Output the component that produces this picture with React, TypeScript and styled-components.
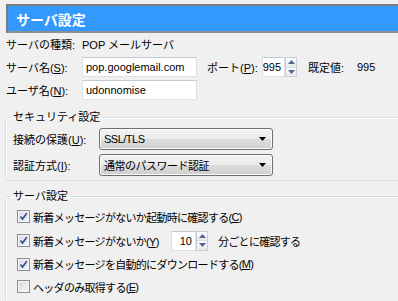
import styled, { createGlobalStyle } from "styled-components";

const Global = createGlobalStyle`
  body {
    margin: 0;
    background: #f0f0f0;
    font-family: "Liberation Sans", "Noto Sans CJK JP", sans-serif;
    font-size: 11px;
    color: #000;
  }
`;

const Page = styled.div`
  height: 301px;
  padding: 4px 0 0 6px;
  box-sizing: border-box;
  overflow: hidden;
`;

const Header = styled.div`
  height: 25px;
  display: flex;
  align-items: center;
  padding-left: 8px;
  border-top: 2px solid #7b7b7b;
  border-left: 2px solid #7b7b7b;
  border-bottom: 2px solid #8f8f8f;
  background: #3399ff;
  color: #fff;
  font-size: 14px;
  font-weight: bold;
`;

const Form = styled.div`
  display: flex;
  flex-direction: column;
  gap: 3px;
  padding-top: 1px;
`;

const Row = styled.div<{ $h?: number }>`
  display: flex;
  align-items: center;
  height: ${(p) => p.$h ?? 20}px;
  white-space: nowrap;
`;

const Label = styled.span<{ $w?: number; $ml?: number }>`
  flex: none;
  width: ${(p) => (p.$w ? `${p.$w}px` : "auto")};
  margin-left: ${(p) => p.$ml ?? 0}px;
`;

const Key = styled.span`
  text-decoration: underline;
`;

const TextInput = styled.div<{ $w: number; $right?: boolean }>`
  box-sizing: border-box;
  width: ${(p) => p.$w}px;
  height: 20px;
  display: flex;
  align-items: center;
  justify-content: ${(p) => (p.$right ? "flex-end" : "flex-start")};
  padding: 0 3px;
  background: #fff;
  border: 1px solid #dbe1e8;
  border-top-color: #c4cad2;
  letter-spacing: 0;
`;

const Spin = styled.div`
  display: flex;
  flex: none;
`;

const SpinButtons = styled.div`
  box-sizing: border-box;
  width: 12px;
  height: 20px;
  display: flex;
  flex-direction: column;
  border: 1px solid #c7ced6;
  background: #eef1f4;
`;

const SpinHalf = styled.div`
  flex: 1;
  display: flex;
  align-items: center;
  justify-content: center;
  border-bottom: 1px solid #d5dbe1;
  background: linear-gradient(#fbfbfb, #e6e9ec);
  &:last-child {
    border-bottom: none;
  }
`;

const Arrow = ({ down }: { down?: boolean }) => (
  <svg width="7" height="4" viewBox="0 0 7 4">
    <path d={down ? "M0 0H7L3.5 4Z" : "M0 4H7L3.5 0Z"} fill="#4f6592" />
  </svg>
);

const SpinBox = ({ value, w }: { value: string; w: number }) => (
  <Spin>
    <TextInput $w={w} $right>
      {value}
    </TextInput>
    <SpinButtons>
      <SpinHalf>
        <Arrow />
      </SpinHalf>
      <SpinHalf>
        <Arrow down />
      </SpinHalf>
    </SpinButtons>
  </Spin>
);

const Group = styled.fieldset<{ $mt: number; $pt: number }>`
  box-sizing: border-box;
  width: calc(100% + 20px);
  min-inline-size: 0;
  margin: ${(p) => p.$mt}px 0 0 -1px;
  padding: ${(p) => p.$pt}px 0 4px 7px;
  border: 1px solid #d5dfe5;
  border-radius: 3px;
  box-shadow: inset 1px 1px 0 #fff;
`;

const Legend = styled.legend`
  height: 12px;
  line-height: 12px;
  padding: 0 2px;
  margin-left: -2px;
`;

const Stack = styled.div<{ $gap: number }>`
  display: flex;
  flex-direction: column;
  gap: ${(p) => p.$gap}px;
`;

const Combo = styled.div`
  box-sizing: border-box;
  width: 174px;
  height: 22px;
  display: flex;
  align-items: center;
  justify-content: space-between;
  padding: 0 6px 0 4px;
  border: 1px solid #707070;
  border-radius: 3px;
  background: linear-gradient(#f2f2f2 0%, #ebebeb 50%, #dddddd 50%, #cfcfcf 100%);
  box-shadow: inset 0 0 0 1px #fcfcfc;
  letter-spacing: -0.5px;
`;

const ComboArrow = () => (
  <svg width="7" height="4" viewBox="0 0 7 4">
    <path d="M0 0H7L3.5 4Z" fill="#000" />
  </svg>
);

const CheckRow = styled(Row)`
  padding-left: 4px;
  letter-spacing: -0.7px;
`;

const Box = styled.div`
  box-sizing: border-box;
  flex: none;
  width: 13px;
  height: 13px;
  margin-right: 3px;
  border: 1px solid #8e8f8f;
  background: linear-gradient(135deg, #d8dbe0, #f7f7f7);
  box-shadow: inset 0 0 0 1px #f4f4f4;
  display: flex;
  align-items: center;
  justify-content: center;
`;

const Check = ({ on }: { on?: boolean }) => (
  <Box>
    {on && (
      <svg width="9" height="9" viewBox="0 0 9 9">
        <path d="M1.5 4.5L3.5 7L7.8 1.2" fill="none" stroke="#3e5597" strokeWidth="1.8" />
      </svg>
    )}
  </Box>
);

export default function App() {
  return (
    <Page>
      <Global />
      <Header>サーバ設定</Header>
      <Form>
        <Row>
          <Label $w={76}>サーバの種類:</Label>
          <Label>POP メールサーバ</Label>
        </Row>
        <Row>
          <Label $w={76}>
            サーバ名(<Key>S</Key>):
          </Label>
          <TextInput $w={115}>pop.googlemail.com</TextInput>
          <Label $w={55} $ml={10}>
            ポート(<Key>P</Key>):
          </Label>
          <SpinBox value="995" w={23} />
          <Label $w={49} $ml={11}>
            既定値:
          </Label>
          <Label>995</Label>
        </Row>
        <Row>
          <Label $w={76}>
            ユーザ名(<Key>N</Key>):
          </Label>
          <TextInput $w={115}>udonnomise</TextInput>
        </Row>
      </Form>

      <Group $mt={11} $pt={5}>
        <Legend>セキュリティ設定</Legend>
        <Stack $gap={4}>
          <Row $h={22}>
            <Label $w={86}>
              接続の保護(<Key>U</Key>):
            </Label>
            <Combo>
              SSL/TLS
              <ComboArrow />
            </Combo>
          </Row>
          <Row $h={22}>
            <Label $w={86}>
              認証方式(<Key>I</Key>):
            </Label>
            <Combo>
              通常のパスワード認証
              <ComboArrow />
            </Combo>
          </Row>
        </Stack>
      </Group>

      <Group $mt={9} $pt={3}>
        <Legend>サーバ設定</Legend>
        <Stack $gap={0}>
          <CheckRow $h={23}>
            <Check on />
            新着メッセージがないか起動時に確認する(<Key>C</Key>)
          </CheckRow>
          <CheckRow $h={25}>
            <Check on />
            <Label $w={138}>
              新着メッセージがないか(<Key>Y</Key>)
            </Label>
            <SpinBox value="10" w={25} />
            <Label $ml={10}>分ごとに確認する</Label>
          </CheckRow>
          <CheckRow $h={22}>
            <Check on />
            新着メッセージを自動的にダウンロードする(<Key>M</Key>)
          </CheckRow>
          <CheckRow $h={23}>
            <Check />
            ヘッダのみ取得する(<Key>E</Key>)
          </CheckRow>
        </Stack>
      </Group>
    </Page>
  );
}
